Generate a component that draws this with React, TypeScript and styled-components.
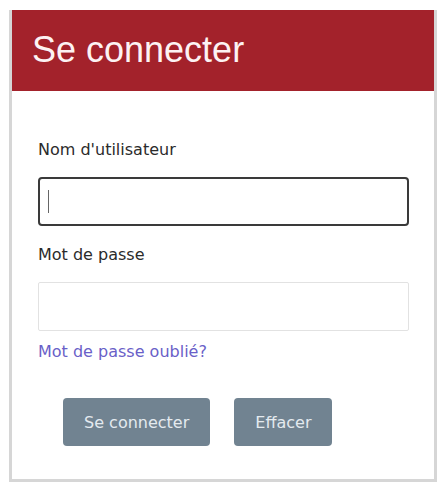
import React from "react";
import styled, { createGlobalStyle } from "styled-components";

const Global = createGlobalStyle`
  html, body { margin: 0; padding: 0; background: #ffffff; }
  body { font-family: "DejaVu Sans", "Liberation Sans", sans-serif; }
  * { box-sizing: border-box; }
`;

const Page = styled.div`
  width: 440px;
  height: 484px;
  padding: 10px 0 0 9px;
`;

const Card = styled.div`
  width: 428px;
  height: 472px;
  border: 3px solid #d6d6d6;
  border-top: 0;
  background: #ffffff;
  display: flex;
  flex-direction: column;
`;

const Header = styled.div`
  height: 81px;
  background: #a3222b;
  display: flex;
  align-items: center;
  padding: 0 0 2px 20px;
`;

const Title = styled.h1`
  margin: 0;
  font-family: "Liberation Sans", Arial, sans-serif;
  font-weight: 400;
  font-size: 36px;
  color: #fdf2f3;
`;

const Body = styled.form`
  display: flex;
  flex-direction: column;
  padding: 49px 25px 0 26px;
`;

const Label = styled.label<{ $gap: number }>`
  font-size: 16px;
  line-height: 19px;
  color: #2b2b2b;
  margin-bottom: ${(p) => p.$gap}px;
`;

const Field = styled.div<{ $after: number }>`
  position: relative;
  margin-bottom: ${(p) => p.$after}px;
`;

const Input = styled.input<{ $focused?: boolean }>`
  display: block;
  width: 371px;
  height: 49px;
  margin: 0;
  padding: 0 8px;
  font-family: "DejaVu Sans", sans-serif;
  font-size: 16px;
  background: #ffffff;
  outline: none;
  border-radius: ${(p) => (p.$focused ? 4 : 2)}px;
  border: ${(p) => (p.$focused ? "2px solid #3a3a3a" : "1px solid #e2e2e2")};
`;

const Caret = styled.span`
  position: absolute;
  left: 10px;
  top: 13px;
  width: 1px;
  height: 23px;
  background: #666;
`;

const Link = styled.a`
  font-size: 16px;
  line-height: 19px;
  color: #6a5fc8;
  text-decoration: none;
  margin-bottom: 37px;
`;

const Actions = styled.div`
  display: flex;
  gap: 24px;
  padding-left: 25px;
`;

const Button = styled.button`
  height: 48px;
  padding: 0 21px;
  border: 0;
  border-radius: 4px;
  background: #718391;
  color: #e4eaef;
  font-family: "DejaVu Sans", sans-serif;
  font-size: 16px;
`;

export default function App() {
  return (
    <Page>
      <Global />
      <Card>
        <Header>
          <Title>Se connecter</Title>
        </Header>
        <Body onSubmit={(e) => e.preventDefault()}>
          <Label $gap={18}>Nom d'utilisateur</Label>
          <Field $after={19}>
            <Input type="text" $focused />
            <Caret />
          </Field>
          <Label $gap={18}>Mot de passe</Label>
          <Field $after={11}>
            <Input type="password" />
          </Field>
          <Link href="#">Mot de passe oublié?</Link>
          <Actions>
            <Button type="submit">Se connecter</Button>
            <Button type="reset">Effacer</Button>
          </Actions>
        </Body>
      </Card>
    </Page>
  );
}
